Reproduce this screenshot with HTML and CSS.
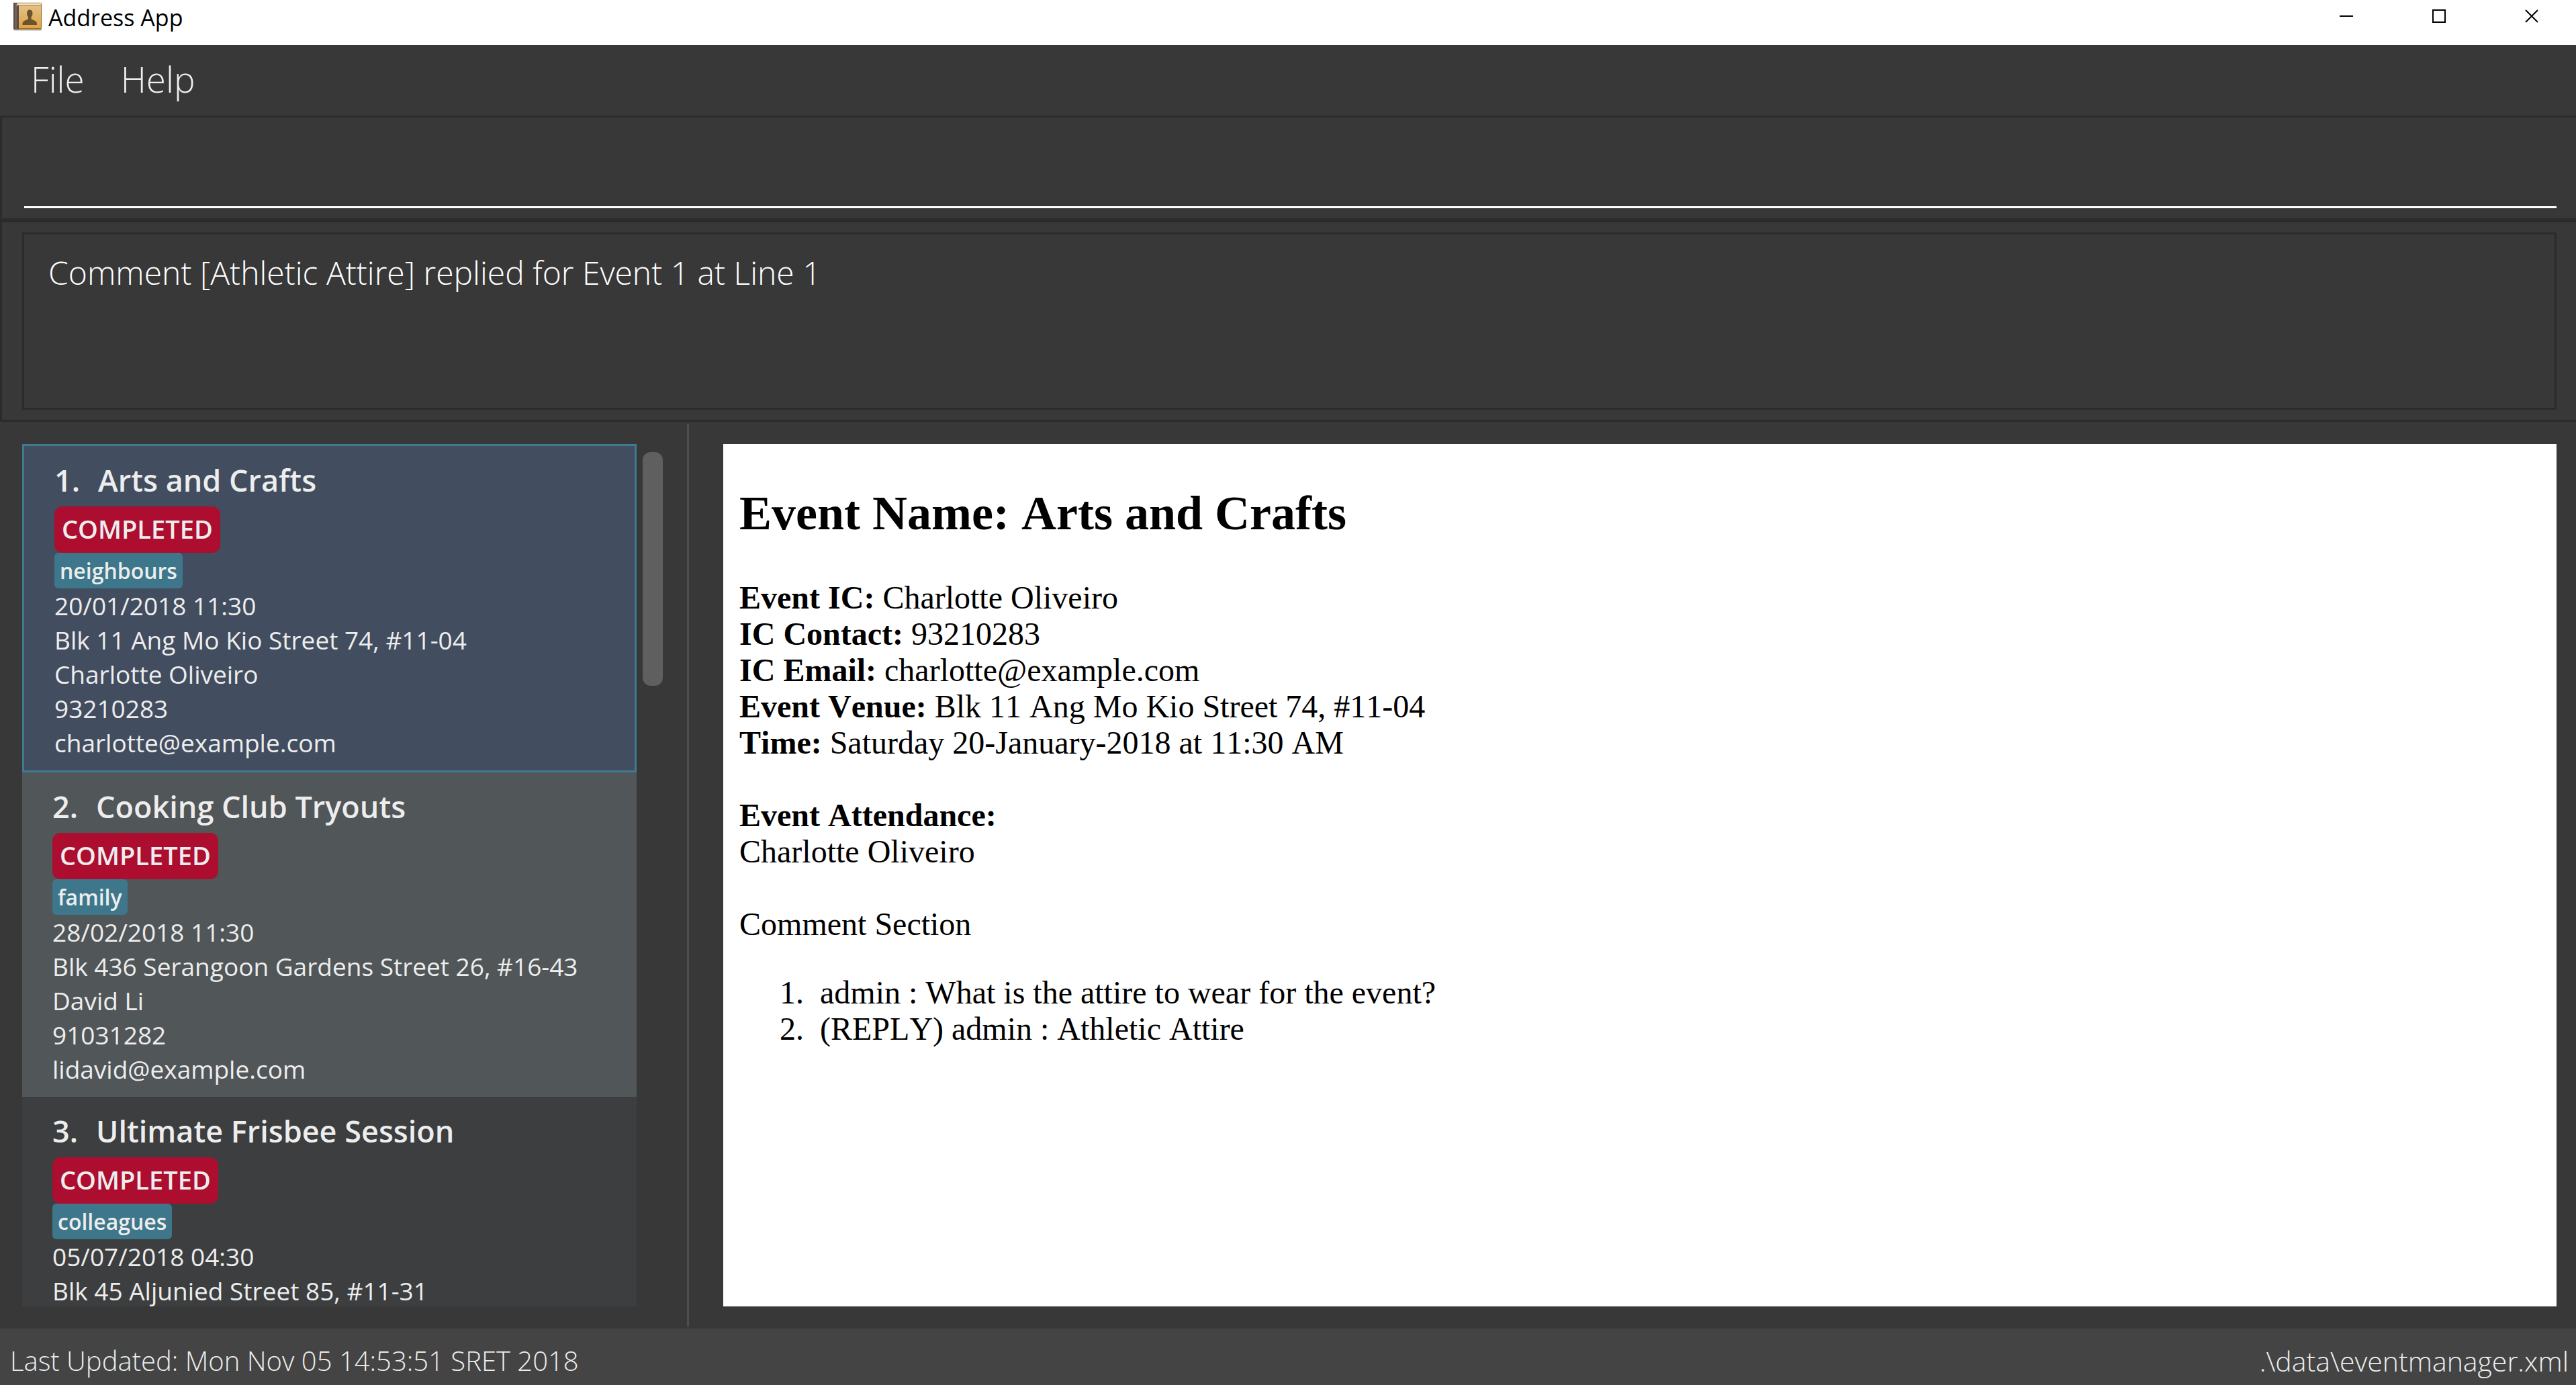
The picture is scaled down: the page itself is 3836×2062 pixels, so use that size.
FILE: index.html
```html
<!DOCTYPE html>
<html lang="en">
<head>
<meta charset="utf-8">
<title>Address App</title>
<link rel="stylesheet" href="styles.css">
</head>
<body>
<header class="titlebar">
  <svg class="app-icon" viewBox="0 0 48 48" aria-hidden="true">
    <defs>
      <linearGradient id="cover" x1="0" y1="0" x2="0" y2="1">
        <stop offset="0" stop-color="#e3c48c"/>
        <stop offset="1" stop-color="#dda443"/>
      </linearGradient>
    </defs>
    <rect x="4" y="43" width="41" height="3" rx="1" fill="#d5d5d8"/>
    <rect x="3" y="4" width="42" height="40" rx="2" fill="#9a6a24"/>
    <rect x="11" y="5" width="33" height="37" fill="url(#cover)"/>
    <rect x="3" y="4" width="8" height="40" rx="1" fill="#5d4843"/>
    <rect x="5" y="5" width="3" height="38" fill="#75605b"/>
    <rect x="8" y="5" width="36" height="2" fill="#f4ead6"/>
    <rect x="7" y="8" width="37" height="1" fill="#b98e4a"/>
    <path d="M27 14.500c3 0 4.500 2 4.500 5.500 0 2.500-1 4-2 5.500v2.500c1 2 8 2 8.500 7v2H16.500v-2c.5-5 7.500-5 8.500-7v-2.500c-1-1.500-2-3-2-5.500 0-3.500 1.500-5.500 4-5.500z" fill="#6b5330"/>
  </svg>
  <span class="app-name">Address App</span>
  <div class="window-controls">
    <button type="button" class="window-button" aria-label="Minimize">
      <svg class="glyph" viewBox="0 0 20 20"><path d="M0 10h20"/></svg>
    </button>
    <button type="button" class="window-button" aria-label="Maximize">
      <svg class="glyph" viewBox="0 0 20 20"><path d="M1 1h18v18H1z"/></svg>
    </button>
    <button type="button" class="window-button" aria-label="Close">
      <svg class="glyph" viewBox="0 0 20 20"><path d="M1 1l18 18M19 1L1 19"/></svg>
    </button>
  </div>
</header>

<nav class="menubar">
  <button type="button" class="menu">File</button>
  <button type="button" class="menu">Help</button>
</nav>

<section class="pane command-pane">
  <input type="text" class="command-input" aria-label="Command">
</section>

<section class="pane result-pane">
  <output class="result">Comment [Athletic Attire] replied for Event 1 at Line 1</output>
</section>

<main class="content">
  <aside class="sidebar">
    <ul class="event-list">
      <li class="event selected">
        <h2 class="event-title"><span>1.</span><span>Arts and Crafts</span></h2>
        <span class="status">COMPLETED</span>
        <span class="tag">neighbours</span>
        <p class="detail">20/01/2018 11:30</p>
        <p class="detail">Blk 11 Ang Mo Kio Street 74, #11-04</p>
        <p class="detail">Charlotte Oliveiro</p>
        <p class="detail">93210283</p>
        <p class="detail">charlotte@example.com</p>
      </li>
      <li class="event even">
        <h2 class="event-title"><span>2.</span><span>Cooking Club Tryouts</span></h2>
        <span class="status">COMPLETED</span>
        <span class="tag">family</span>
        <p class="detail">28/02/2018 11:30</p>
        <p class="detail">Blk 436 Serangoon Gardens Street 26, #16-43</p>
        <p class="detail">David Li</p>
        <p class="detail">91031282</p>
        <p class="detail">lidavid@example.com</p>
      </li>
      <li class="event">
        <h2 class="event-title"><span>3.</span><span>Ultimate Frisbee Session</span></h2>
        <span class="status">COMPLETED</span>
        <span class="tag">colleagues</span>
        <p class="detail">05/07/2018 04:30</p>
        <p class="detail">Blk 45 Aljunied Street 85, #11-31</p>
      </li>
    </ul>
    <div class="scroll-track"><div class="scroll-thumb"></div></div>
  </aside>
  <div class="splitter"></div>
  <article class="page">
    <h1 class="page-title">Event Name: Arts and Crafts</h1>
    <p class="facts">
      <b>Event IC:</b> Charlotte Oliveiro<br>
      <b>IC Contact:</b> 93210283<br>
      <b>IC Email:</b> charlotte@example.com<br>
      <b>Event Venue:</b> Blk 11 Ang Mo Kio Street 74, #11-04<br>
      <b>Time:</b> Saturday 20-January-2018 at 11:30 AM
    </p>
    <p class="facts">
      <b>Event Attendance:</b><br>
      Charlotte Oliveiro
    </p>
    <p class="facts">Comment Section</p>
    <ol class="comments">
      <li>admin : What is the attire to wear for the event?</li>
      <li>(REPLY) admin : Athletic Attire</li>
    </ol>
  </article>
</main>

<footer class="statusbar">
  <span>Last Updated: Mon Nov 05 14:53:51 SRET 2018</span>
  <span class="file-path">.\data\eventmanager.xml</span>
</footer>
</body>
</html>
```
FILE: styles.css
```css
* {
  box-sizing: border-box;
}

body {
  margin: 0;
  height: 100vh;
  display: flex;
  flex-direction: column;
  overflow: hidden;
  background: #383838;
  color: #ededed;
  font-family: "Open Sans", "Noto Sans", sans-serif;
  font-kerning: none;
}

button,
input {
  font: inherit;
  color: inherit;
  background: none;
  border: 0;
  padding: 0;
}

h1,
h2,
p,
ul,
ol {
  margin: 0;
  padding: 0;
}

/* Window title bar */
.titlebar {
  flex: none;
  display: flex;
  align-items: flex-start;
  padding: 0 0 15px 17px;
  background: #fff;
  color: #000;
}

.app-icon {
  width: 48px;
  height: 48px;
}

.app-name {
  margin-left: 7px;
  font-size: 34px;
  line-height: 52px;
}

.window-controls {
  display: flex;
  gap: 6px;
  margin-left: auto;
}

.window-button {
  display: flex;
  align-items: center;
  justify-content: center;
  width: 132px;
  height: 48px;
}

.glyph {
  width: 20px;
  height: 20px;
  fill: none;
  stroke: #000;
  stroke-width: 2;
}

/* Menu bar */
.menubar {
  flex: none;
  display: flex;
  gap: 54px;
  padding: 0 46px 3px;
  font-size: 53px;
  font-weight: 300;
  line-height: 102px;
}

/* Command and result panes */
.pane {
  flex: none;
  border: 3px solid #2b2b2b;
  border-right: 0;
}

.command-pane {
  display: flex;
  padding: 15px 29px 15px 33px;
}

.command-input {
  flex: 1;
  height: 120px;
  border-bottom: 3px solid #fff;
  font-size: 48px;
  font-weight: 300;
}

.result-pane {
  padding: 15px 29px 15px 30px;
}

.result {
  display: block;
  height: 264px;
  padding: 24px 36px;
  border: 3px solid #2b2b2b;
  color: #fff;
  font-size: 48px;
  font-weight: 300;
  line-height: 65px;
}

/* Event list */
.content {
  flex: 1;
  min-height: 0;
  display: flex;
  padding: 3px 0;
}

.sidebar {
  flex: 0 0 26.67%;
  display: flex;
  gap: 9px;
  padding: 30px 36px 30px 33px;
}

.event-list {
  flex: 1;
  overflow: hidden;
  list-style: none;
  background: #3c3e3f;
}

.event {
  display: flex;
  flex-direction: column;
  align-items: flex-start;
  padding: 15px 45px 16px;
}

.event.even {
  background: #515658;
}

.event.selected {
  border: 3px solid #3e7b91;
  background: #424d5f;
}

.event-title {
  display: flex;
  gap: 27px;
  margin-bottom: 3px;
  font-size: 45px;
  font-weight: 600;
  line-height: 72px;
}

.status {
  padding: 0 11px 3px;
  border-radius: 12px;
  background: #ad0d2f;
  font-size: 38px;
  font-weight: 600;
  line-height: 66px;
}

.tag {
  padding: 0 8px;
  border-radius: 6px;
  background: #3e778b;
  font-size: 32px;
  font-weight: 600;
  line-height: 53px;
}

.detail {
  font-size: 37px;
  line-height: 51px;
  white-space: nowrap;
}

.scroll-track {
  width: 30px;
  padding: 12px 0;
}

.scroll-thumb {
  height: 348px;
  border-radius: 12px;
  background: #5f5f5f;
}

.splitter {
  width: 3px;
  background: #4d4d4d;
}

/* Event page */
.page {
  flex: 1;
  margin: 30px 29px 30px 51px;
  padding: 62px 24px;
  overflow: hidden;
  background: #fff;
  color: #000;
  font-family: "Liberation Serif", "Times New Roman", serif;
  font-size: 48px;
  line-height: 54px;
}

.page-title {
  margin-bottom: 58px;
  font-size: 72px;
  line-height: 82px;
}

.facts {
  margin-bottom: 54px;
}

.comments {
  margin-top: -6px;
  padding-left: 120px;
}

.comments li::marker {
  content: counter(list-item) ".\00a0\00a0";
}

/* Status bar */
.statusbar {
  flex: none;
  display: flex;
  justify-content: space-between;
  padding: 12px 11px 0 15px;
  background: #444;
  font-size: 40px;
  font-weight: 300;
  line-height: 72px;
}

.file-path {
  font-size: 41px;
}
```
